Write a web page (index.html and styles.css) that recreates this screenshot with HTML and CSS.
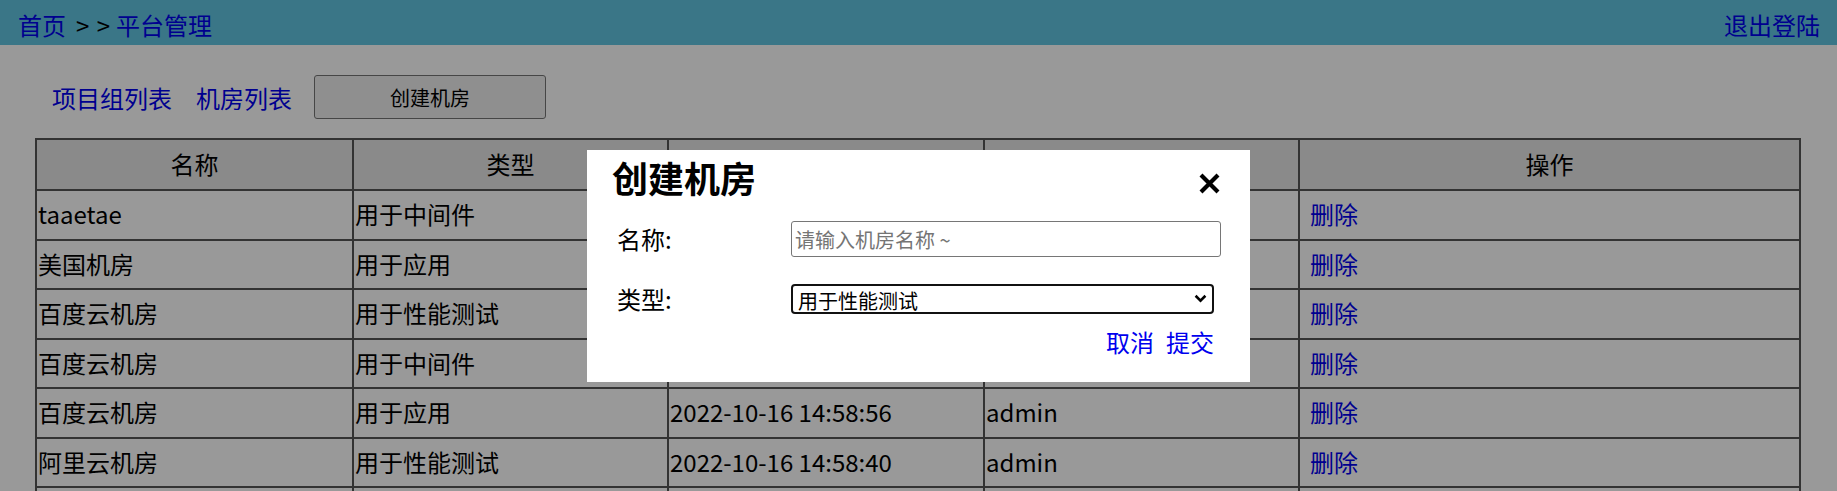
FILE: index.html
```html
<!DOCTYPE html>
<html>
<head>
    <meta charset="UTF-8">
    <title>平台管理 - 机房列表</title>
    <link rel="stylesheet" href="styles.css">
</head>
<body>
    <div id="header">
        <div class="crumb"><a href="#">首页</a><span class="sep">&gt; &gt;</span><a href="#">平台管理</a></div>
        <a href="#" class="logout">退出登陆</a>
    </div>
    <div id="main">
        <div class="nav">
            <a href="#">项目组列表</a>
            <a href="#">机房列表</a>
            <button type="button" class="add">创建机房</button>
        </div>
        <table class="list">
            <colgroup>
                <col class="c1"><col class="c2"><col class="c3"><col class="c4"><col class="c5">
            </colgroup>
            <thead>
                <tr><th>名称</th><th>类型</th><th>创建时间</th><th>创建人</th><th>操作</th></tr>
            </thead>
            <tbody>
                <tr><td>taaetae</td><td>用于中间件</td><td>2022-10-17 10:12:03</td><td>admin</td><td><a href="#">删除</a></td></tr>
                <tr><td>美国机房</td><td>用于应用</td><td>2022-10-16 15:02:31</td><td>admin</td><td><a href="#">删除</a></td></tr>
                <tr><td>百度云机房</td><td>用于性能测试</td><td>2022-10-16 14:59:27</td><td>admin</td><td><a href="#">删除</a></td></tr>
                <tr><td>百度云机房</td><td>用于中间件</td><td>2022-10-16 14:59:10</td><td>admin</td><td><a href="#">删除</a></td></tr>
                <tr><td>百度云机房</td><td>用于应用</td><td>2022-10-16 14:58:56</td><td>admin</td><td><a href="#">删除</a></td></tr>
                <tr><td>阿里云机房</td><td>用于性能测试</td><td>2022-10-16 14:58:40</td><td>admin</td><td><a href="#">删除</a></td></tr>
                <tr class="more"><td></td><td></td><td></td><td></td><td></td></tr>
            </tbody>
        </table>
    </div>

    <div class="mask"></div>
    <div class="dialog">
        <div class="dialog-head">
            <h2>创建机房</h2>
            <span class="close">
                <svg width="21" height="21" viewBox="0 0 21 21">
                    <path d="M2 2 L19 19 M19 2 L2 19" stroke="#000" stroke-width="4.2" fill="none"/>
                </svg>
            </span>
        </div>
        <div class="row">
            <label>名称:</label>
            <input type="text" placeholder="请输入机房名称 ~">
        </div>
        <div class="row">
            <label>类型:</label>
            <div class="select">
                <select>
                    <option>用于性能测试</option>
                    <option>用于中间件</option>
                    <option>用于应用</option>
                </select>
                <svg class="arrow" width="13" height="9" viewBox="0 0 13 9">
                    <path d="M1.6 1.8 L6.5 6.6 L11.4 1.8" stroke="#000" stroke-width="2.6" fill="none"/>
                </svg>
            </div>
        </div>
        <div class="ops">
            <a href="#">取消</a>
            <a href="#">提交</a>
        </div>
    </div>
</body>
</html>
```

FILE: styles.css
```css
body, div, h2, table {
    margin: 0;
    padding: 0;
}
body {
    font-family: "Noto Sans CJK SC", sans-serif;
    background-color: #ffffff;
    color: #000000;
}
a {
    color: #0000ee;
    text-decoration: none;
}
#header {
    display: flex;
    justify-content: space-between;
    height: 45px;
    box-sizing: border-box;
    padding: 4px 17px 0 18px;
    line-height: 41px;
    font-size: 24px;
    background-color: #61c5e1;
}
#header .sep {
    margin: 0 6px 0 10px;
    word-spacing: 2px;
}
#main .nav {
    display: flex;
    align-items: center;
    height: 44px;
    margin-top: 30px;
    padding-left: 52px;
    font-size: 24px;
}
#main .nav a {
    margin-right: 24px;
}
#main .nav a + a {
    margin-right: 22px;
}
#main .nav .add {
    width: 232px;
    height: 44px;
    font-family: inherit;
    font-size: 20px;
    color: #000000;
    background-color: #efefef;
    border: 1px solid #767676;
    border-radius: 3px;
}
.list {
    margin: 19px 0 0 35px;
    width: 1766px;
    border-collapse: collapse;
    table-layout: fixed;
    font-size: 24px;
}
.list .c1 { width: 317px; }
.list .c2 { width: 315px; }
.list .c3 { width: 316px; }
.list .c4 { width: 315px; }
.list th, .list td {
    border: 2px solid #555555;
    padding: 0 1px 1px;
    text-align: left;
    line-height: 30px;
    white-space: nowrap;
}
.list th {
    text-align: center;
    font-weight: normal;
    background-color: #e6e6e6;
}
.list thead tr {
    height: 51px;
}
.list tbody tr {
    height: 49.5px;
}
.list td a {
    margin-left: 9px;
}
.mask {
    position: fixed;
    top: 0;
    right: 0;
    bottom: 0;
    left: 0;
    background-color: rgba(0, 0, 0, 0.4);
}
.dialog {
    position: fixed;
    top: 150px;
    left: 0;
    right: 0;
    margin: 0 auto;
    width: 663px;
    height: 232px;
    box-sizing: border-box;
    padding: 5px 29px 0 25px;
    background-color: #ffffff;
}
.dialog-head {
    display: flex;
    justify-content: space-between;
    align-items: center;
}
.dialog-head h2 {
    font-size: 36px;
    line-height: 44px;
    font-weight: bold;
}
.dialog-head .close {
    display: block;
    height: 21px;
    margin: 13px 1px 0 0;
}
.dialog-head .close svg {
    display: block;
}
.dialog .row {
    display: flex;
    align-items: center;
    padding-left: 5px;
    font-size: 24px;
    margin-top: 22px;
}
.dialog .row + .row {
    margin-top: 27px;
}
.dialog .row label {
    width: 174px;
    line-height: 30px;
}
.dialog input {
    width: 430px;
    height: 36px;
    box-sizing: border-box;
    padding: 0 3px;
    border: 1px solid #767676;
    border-radius: 3px;
    font-family: inherit;
    font-size: 20px;
    outline: none;
}
.dialog input::placeholder {
    color: #757575;
}
.dialog .select {
    position: relative;
    width: 423px;
    height: 30px;
}
.dialog select {
    display: block;
    width: 100%;
    height: 30px;
    box-sizing: border-box;
    padding: 0 0 0 5px;
    border: 2px solid #111111;
    border-radius: 4px;
    font-family: inherit;
    font-size: 20px;
    color: #000000;
    background-color: #ffffff;
    -webkit-appearance: none;
    appearance: none;
}
.dialog .select .arrow {
    position: absolute;
    right: 7px;
    top: 10px;
}
.dialog .ops {
    display: flex;
    justify-content: flex-end;
    padding-right: 7px;
    margin-top: 13px;
    font-size: 24px;
    line-height: 30px;
}
.dialog .ops a + a {
    margin-left: 12px;
}
```
